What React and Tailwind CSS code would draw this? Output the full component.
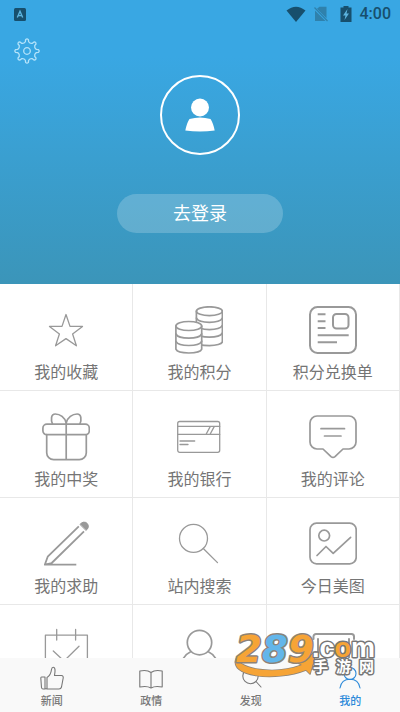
import React from 'react';
import clsx from 'clsx';

const FONT = "font-['Roboto','Noto_Sans_CJK_SC',sans-serif]";

// outline of the eight-tooth gear, centred on 0,0
function gearPath() {
  const at = (deg, r) => {
    const a = (deg * Math.PI) / 180;
    return `${(Math.sin(a) * r).toFixed(2)} ${(-Math.cos(a) * r).toFixed(2)}`;
  };
  let d = '';
  for (let i = 0; i < 8; i++) {
    const a = i * 45;
    d += `${i === 0 ? 'M' : 'L'}${at(a - 7, 11.4)} Q${at(a, 13)} ${at(a + 7, 11.4)} `;
    d += `L${at(a + 10, 9.4)} Q${at(a + 22.5, 7.8)} ${at(a + 35, 9.4)} `;
  }
  return `${d}Z`;
}

const GEAR = gearPath();

function Icon({ children, width = 2 }) {
  return (
    <svg
      viewBox="0 0 48 48"
      className="h-12 w-12 shrink-0"
      fill="none"
      stroke="#999999"
      strokeWidth={width}
      strokeLinecap="round"
      strokeLinejoin="round"
      aria-hidden="true"
    >
      {children}
    </svg>
  );
}

const StarIcon = () => (
  <Icon width={1.3}>
    <path d="M24 8.5 28 20.4H40.5L30.6 28 34.4 39.8 24 32.6 13.6 39.8 17.4 28 7.5 20.4H20Z" />
  </Icon>
);

const CoinsIcon = () => (
  <Icon width={1.7}>
    <ellipse cx="34.4" cy="5.2" rx="13" ry="4.4" />
    <path d="M21.4 5.2V36C22 38.4 28 39.6 34.4 39.6S47.4 38 47.4 35.6V5.2" />
    <path d="M21.4 12.2c1.5 2.7 7 4.2 13 4.2s11.5-1.5 13-4.2M21.4 19.4c1.5 2.7 7 4.2 13 4.2s11.5-1.5 13-4.2M21.4 27c1.5 2.7 7 4.2 13 4.2s11.5-1.5 13-4.2" />
    <path fill="#fff" d="M.9 20v23.2c1 2.4 7 3.8 12.9 3.8s12-1.4 12.9-3.8V20Z" />
    <ellipse cx="13.8" cy="20" rx="12.9" ry="4.5" fill="#fff" />
    <path d="M.9 28c1.5 2.7 7 4.2 12.9 4.2s11.4-1.5 12.9-4.2M.9 35.3c1.5 2.7 7 4.2 12.9 4.2s11.4-1.5 12.9-4.2" />
  </Icon>
);

const VoucherIcon = () => (
  <Icon>
    <rect x="1" y="1" width="46" height="46" rx="7.5" />
    <rect x="24" y="8" width="15.5" height="14.5" rx="3.5" />
    <path strokeLinecap="butt" d="M8.7 8.2h7.8M8.7 15.2h7.8M8.7 22.1h7.8M8.7 29.3h31M8.7 36.2h19.3" />
  </Icon>
);

const GiftIcon = () => (
  <Icon width={1.7}>
    <rect x=".9" y="11.2" width="46.4" height="10.5" rx="4" />
    <path d="M4.7 21.7v18a7 7 0 0 0 7 7h25.6a7 7 0 0 0 7-7v-18M24.2 10v36.7" />
    <path d="M24.2 10C23 4.5 18 1 13.3 1c-4.5 0-4.5 6-2.8 10M24.2 10C25.4 4.5 30.4 1 35.1 1c4.5 0 4.5 6 2.8 10" />
  </Icon>
);

const CardIcon = () => (
  <Icon width={1.3}>
    <rect x="2.7" y="8.5" width="42" height="30.8" rx="2" />
    <path d="M2.7 13.4h42M2.7 21.4h42M31.2 21l4-7.4M35.2 21l4-7.4M5 28h14.7M5 31.5h8" />
  </Icon>
);

const CommentIcon = () => (
  <Icon width={1.7}>
    <path d="M8 3h32a7 7 0 0 1 7 7v19a7 7 0 0 1-7 7h-6l-8 7.6q-2 1.6-4 0L14 36H8a7 7 0 0 1-7-7V10a7 7 0 0 1 7-7Z" />
    <path d="M12 15.7h23.5M15.5 23h16.5" />
  </Icon>
);

const PencilIcon = () => (
  <Icon width={1.8}>
    <path strokeLinecap="butt" d="M36.8 6.3 5.7 36.7 2.8 44.7H34.3M2.8 44.7 9.7 43 42 11.4" />
    <path fill="#999999" strokeWidth="1" d="M38.2 4.2A4.4 4.4 0 1 1 44.3 10.2Z" />
  </Icon>
);

const SearchIcon = () => (
  <Icon width={1.3}>
    <circle cx="18.5" cy="18.4" r="14" />
    <path d="M28.3 28.5 42.5 42.6" />
  </Icon>
);

const PictureIcon = () => (
  <Icon width={1.7}>
    <rect x="1" y="3.2" width="46.2" height="40.6" rx="6.5" />
    <circle cx="15.2" cy="15.6" r="5.4" />
    <path d="M8 35.5 17 26.5 24.2 33.4 41.6 17.3" />
  </Icon>
);

const CalendarIcon = () => (
  <Icon width={1.3}>
    <path d="M3.4 47V8.2H45.4V47ZM14.7 2.5V13M33.6 2.5V13M11.3 24 22 34 37 19.3" />
  </Icon>
);

const PersonIcon = () => (
  <Icon width={1.7}>
    <circle cx="24.5" cy="15.6" r="12.2" />
    <path d="M16 24.6C11 27 8 31 6 36M33 24.6C38 27 41 31 43 36" />
  </Icon>
);

const TicketIcon = () => (
  <Icon>
    <path d="M4.5 12V9.5a2.5 2.5 0 0 1 2.5-2.5H42.5a2.5 2.5 0 0 1 2.5 2.5V12M9 12V42H40V12" />
  </Icon>
);

const MENU = [
  { label: '我的收藏', Glyph: StarIcon },
  { label: '我的积分', Glyph: CoinsIcon },
  { label: '积分兑换单', Glyph: VoucherIcon },
  { label: '我的中奖', Glyph: GiftIcon },
  { label: '我的银行', Glyph: CardIcon },
  { label: '我的评论', Glyph: CommentIcon },
  { label: '我的求助', Glyph: PencilIcon },
  { label: '站内搜索', Glyph: SearchIcon },
  { label: '今日美图', Glyph: PictureIcon },
  { Glyph: CalendarIcon },
  { Glyph: PersonIcon },
  { Glyph: TicketIcon },
];

const TABS = [
  {
    label: '新闻',
    art: (
      <path d="M1.5 11H5V23H3Q1.8 23 1.5 21.5L.8 12Q.8 11 1.5 11ZM7 22.5V11.5C9.5 10 11 7.5 11.5 3.5Q11.8 1.2 13.2 1.2C15.5 1.2 15.3 5 14.5 9.5H21.5Q23.5 9.7 23.2 12L21.5 21Q21 23 19 23H8.5Q7.5 23 5 22.5" />
    ),
  },
  {
    label: '政情',
    art: <path d="M12 6.5C9 4.2 4.5 4.2 .8 5V21C4.5 20.2 9 20.2 12 22 15 20.2 19.5 20.2 23.2 21V5C19.5 4.2 15 4.2 12 6.5ZM12 6.5V22" />,
  },
  {
    label: '发现',
    art: (
      <>
        <circle cx="11.5" cy="10" r="7.7" />
        <path d="M17 15.5 22 21" />
      </>
    ),
  },
  {
    label: '我的',
    active: true,
    art: (
      <>
        <circle cx="12" cy="7.5" r="6" />
        <path d="M2 22C3 16 7 13.3 12 13.3S21 16 22 22" />
      </>
    ),
  },
];

function StatusBar() {
  return (
    <div className="flex h-7 items-center gap-3 pr-[9px] pl-[14px] text-[#174f6d]">
      <svg viewBox="0 0 12 13" className="h-[13px] w-3" aria-hidden="true">
        <rect width="12" height="13" rx="1.5" fill="currentColor" />
        <path d="M3.3 9.5 6 3.3 8.7 9.5M4.3 7.6h3.4" fill="none" stroke="#5cb4df" strokeWidth="1.4" />
      </svg>
      <div className="ml-auto flex items-center gap-2">
        <svg viewBox="0 0 20 16" className="h-4 w-5" fill="currentColor" aria-hidden="true">
          <path d="M.5 4.5Q10-3.2 19.5 4.5L10 16Z" />
        </svg>
        <svg viewBox="0 0 14 16" className="h-4 w-[14px]" aria-hidden="true">
          <path d="M5.5.8H12.5V12.2L3 2.8ZM1 4.5 11.5 15H1Z" fill="#2f81ac" />
          <path d="M.5 1.5 13.5 15" stroke="#2f81ac" strokeWidth="1.2" />
        </svg>
        <svg viewBox="0 0 12 16" className="ml-1 h-4 w-3" aria-hidden="true">
          <path d="M3.5 0h5v1.5H11.5V16H.5V1.5H3.5Z" fill="currentColor" />
          <path d="M7.5 3 3 9.5H5.5L4.5 14 9 7.5H6.5Z" fill="#5cb4df" />
        </svg>
        <time className="text-base leading-5 font-medium">4:00</time>
      </div>
    </div>
  );
}

function ProfileHeader() {
  return (
    <header className="flex h-[284px] flex-col bg-linear-to-b from-[#39a7e3] from-20% to-[#3b95b9]">
      <StatusBar />
      <button type="button" aria-label="设置" className="mt-[10px] ml-[14px] h-[26px] w-[26px]">
        <svg viewBox="-13 -13 26 26" className="h-[26px] w-[26px]" fill="none" stroke="#b4e3fa" strokeWidth="1.3" strokeLinejoin="round">
          <path d={GEAR} />
          <circle r="3.3" />
        </svg>
      </button>
      <div className="mt-[11px] flex h-20 w-20 items-center justify-center self-center rounded-full border-2 border-white">
        <svg viewBox="0 0 30 34" className="h-[34px] w-[30px]" fill="#fff" aria-hidden="true">
          <circle cx="15" cy="9.5" r="9" />
          <path d="M4.5 21Q15 18 25.5 21 28 24.5 29.7 32.5 15 34.5.3 32.5 2 24.5 4.5 21Z" />
        </svg>
      </div>
      <button type="button" className="mt-[39px] h-[39px] w-5/12 self-center rounded-full bg-white/20 text-lg text-white">
        去登录
      </button>
    </header>
  );
}

function MenuCell({ label, Glyph }) {
  return (
    <button type="button" className="flex h-[107px] flex-col items-center gap-[7px] border-r border-b border-[#e8e8e8] bg-white pt-[22px]">
      <Glyph />
      {label && <span className="text-base leading-6 text-[#757575]">{label}</span>}
    </button>
  );
}

function TabBar() {
  return (
    <nav className="grid h-[54px] shrink-0 grid-cols-4 bg-[#f9f9f9] pl-[2px]">
      {TABS.map(({ label, art, active }) => (
        <a
          key={label}
          href="#"
          className={clsx('flex flex-col items-center gap-1 pt-2', active ? 'text-[#2d8ad9]' : 'text-[#777777]')}
        >
          <svg viewBox="0 0 24 24" className="h-6 w-6" fill="none" stroke="currentColor" strokeWidth="1.1" strokeLinecap="round" strokeLinejoin="round" aria-hidden="true">
            {art}
          </svg>
          <span className="text-[11px] leading-4 font-medium">{label}</span>
        </a>
      ))}
    </nav>
  );
}

function SiteBadge() {
  return (
    <svg
      viewBox="0 -10 146 62"
      className="pointer-events-none absolute right-5 bottom-[27px] h-[62px] w-[146px]"
      strokeLinejoin="round"
      paintOrder="stroke"
    >
      <path d="M3 24C2 35 38 43 68 32L64 30 82 19 76 41 72 37C42 49-8 44 3 24Z" fill="#f6a436" stroke="#8d8378" strokeWidth="1.5" />
      <g className="font-['DejaVu_Sans',sans-serif] font-bold italic" fontSize="37" stroke="#8d8378" strokeWidth="3">
        <text x="2" y="29" fill="#f6a436">2</text>
        <text x="28" y="29" fill="#63b6ea">8</text>
        <text x="54" y="29" fill="#f6a436">9</text>
      </g>
      <text x="78" y="24" fontSize="27" className="font-['Liberation_Sans',sans-serif] font-bold" fill="#fff" stroke="#777" strokeWidth="3">
        .c<tspan fill="#f6a436">o</tspan>m
      </text>
      <g className="font-['Noto_Sans_CJK_SC',sans-serif] font-bold" fontSize="15" fill="#fff" stroke="#777" strokeWidth="3">
        <text x="79" y="39">手</text>
        <text x="102" y="39">游</text>
        <text x="125" y="39">网</text>
      </g>
    </svg>
  );
}

export default function App() {
  return (
    <div className={clsx('relative flex h-screen flex-col overflow-hidden bg-white', FONT)}>
      <main className="min-h-0 flex-1 overflow-y-auto [scrollbar-width:none]">
        <ProfileHeader />
        <section className="grid grid-cols-3">
          {MENU.map((item, i) => (
            <MenuCell key={i} {...item} />
          ))}
        </section>
      </main>
      <TabBar />
      <SiteBadge />
    </div>
  );
}
